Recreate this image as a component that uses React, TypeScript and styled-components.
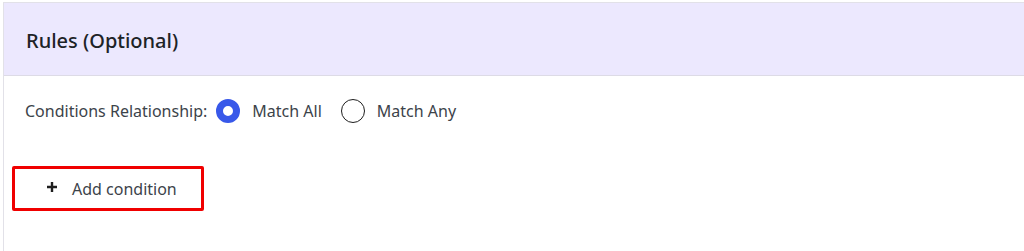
import React, { useState } from "react";
import styled, { createGlobalStyle } from "styled-components";

const GlobalStyle = createGlobalStyle`
  html, body {
    margin: 0;
    padding: 0;
    background: #ffffff;
    font-family: "Noto Sans", "Open Sans", sans-serif;
  }
`;

const Page = styled.div`
  padding: 2px 0 0 3px;
  height: 251px;
  box-sizing: border-box;
  overflow: hidden;
`;

const Panel = styled.section`
  border: 1px solid #e2e1e8;
  border-right: none;
  border-bottom: none;
  height: 100%;
  box-sizing: border-box;
  background: #fff;
`;

const Header = styled.div`
  height: 73px;
  background: #ece8fe;
  border-bottom: 1px solid #dddbe6;
  display: flex;
  align-items: center;
  padding: 3px 0 0 22px;
  box-sizing: border-box;
`;

const Title = styled.h2`
  margin: 0;
  font-size: 20px;
  font-weight: 500;
  color: #1d2327;
`;

const Body = styled.div`
  padding: 19px 0 0 21px;
`;

const RelationRow = styled.div`
  display: flex;
  align-items: center;
  height: 32px;
  font-size: 16px;
  color: #3c434a;
`;

const Label = styled.span`
  margin-right: 9px;
`;

const Option = styled.label`
  display: flex;
  align-items: center;
  cursor: pointer;
  margin-right: 19px;
`;

const Dot = styled.span<{ $checked: boolean }>`
  width: 24px;
  height: 24px;
  border-radius: 50%;
  box-sizing: border-box;
  margin-right: 12px;
  border: ${(p) => (p.$checked ? "7px solid #3858e9" : "1.5px solid #1e1e1e")};
  background: #fff;
`;

const AddButton = styled.button`
  margin: 39px 0 0 -13px;
  width: 192px;
  height: 45px;
  border: 3px solid #f00000;
  border-radius: 2px;
  background: #fff;
  display: flex;
  align-items: center;
  padding: 0 0 0 31px;
  box-sizing: border-box;
  font-family: inherit;
  font-size: 16px;
  color: #3c434a;
  cursor: pointer;
`;

const Plus = styled.svg`
  width: 12px;
  height: 12px;
  margin-right: 14px;
  margin-top: -4px;
`;

const App: React.FC = () => {
  const [mode, setMode] = useState<"all" | "any">("all");
  return (
    <Page>
      <GlobalStyle />
      <Panel>
        <Header>
          <Title>Rules (Optional)</Title>
        </Header>
        <Body>
          <RelationRow>
            <Label>Conditions Relationship:</Label>
            <Option onClick={() => setMode("all")}>
              <Dot $checked={mode === "all"} />
              Match All
            </Option>
            <Option onClick={() => setMode("any")}>
              <Dot $checked={mode === "any"} />
              Match Any
            </Option>
          </RelationRow>
          <AddButton>
            <Plus viewBox="0 0 12 12">
              <path d="M6 1v10M1 6h10" stroke="#1e1e1e" strokeWidth="2.4" />
            </Plus>
            Add condition
          </AddButton>
        </Body>
      </Panel>
    </Page>
  );
};

export default App;
